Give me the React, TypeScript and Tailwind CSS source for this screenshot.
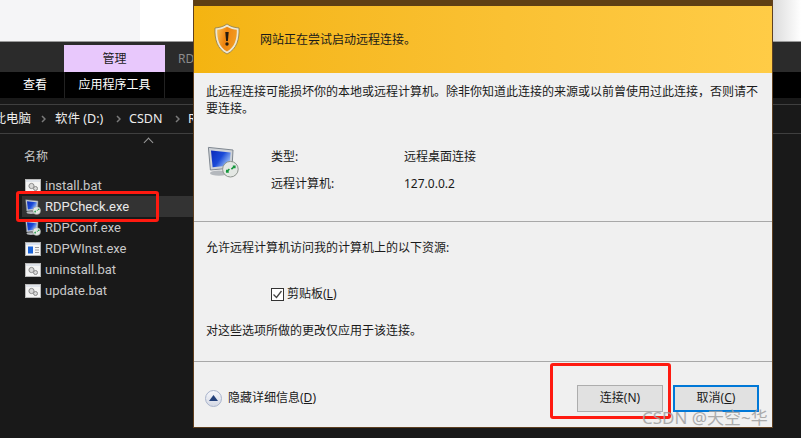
const font = { fontFamily: '"Noto Sans", "Noto Sans CJK SC", sans-serif' };
const fileFont = { fontFamily: 'Roboto, "Noto Sans CJK SC", sans-serif' };

function BatIcon() {
  return (
    <svg width="16" height="14" viewBox="0 0 16 14" className="shrink-0">
      <rect x="0.5" y="0.5" width="15" height="13" fill="#f4f4f4" stroke="#b8b8b8" />
      <rect x="1" y="1" width="14" height="2" fill="#dfe3ea" />
      <circle cx="6.5" cy="7" r="2.6" fill="#d8d8d8" stroke="#8a8a8a" />
      <circle cx="10.5" cy="9.5" r="2" fill="#d8d8d8" stroke="#8a8a8a" />
    </svg>
  );
}

function RdpIcon({ size = 16 }: { size?: number }) {
  return (
    <svg width={size} height={size} viewBox="0 0 16 16" className="shrink-0">
      <defs>
        <linearGradient id="scr" x1="0" y1="0" x2="1" y2="0.6">
          <stop offset="0" stopColor="#0a28b8" />
          <stop offset="0.55" stopColor="#1a4ad8" />
          <stop offset="1" stopColor="#9cc0f4" />
        </linearGradient>
      </defs>
      <path d="M0.700 0.700 L13 2 L12.500 11 L1.700 12 Z" fill="#cfd3d8" stroke="#7f8790" strokeWidth="0.5" />
      <path d="M2 2.200 L11.800 3.200 L11.300 9.800 L2.800 10.600 Z" fill="url(#scr)" />
      <ellipse cx="6" cy="13.600" rx="4.500" ry="1.300" fill="#b4b8bd" />
      <circle cx="11.700" cy="11.600" r="3.900" fill="#e4e8e4" stroke="#8e948e" strokeWidth="0.5" />
      <path d="M9.600 13 L11.200 11.600 M12.200 11.600 L13.800 10.200 M12.900 10.100 h1 v1 M9.900 11.900 v1.100 h1" stroke="#15963c" strokeWidth="0.8" fill="none" />
    </svg>
  );
}

function WinstIcon() {
  return (
    <svg width="16" height="14" viewBox="0 0 16 14" className="shrink-0">
      <rect x="0.5" y="0.5" width="15" height="13" fill="#f6f6f6" stroke="#b0b0b0" />
      <rect x="1" y="1" width="14" height="2" fill="#d9e2f0" />
      <rect x="3" y="4.5" width="5" height="7" fill="#1a63d8" />
      <path d="M10 5.5 h4 M10 8 h4 M10 10.5 h4" stroke="#9a9a9a" />
    </svg>
  );
}

function Shield() {
  return (
    <svg width="26" height="32" viewBox="0 0 26 32">
      <defs>
        <linearGradient id="sh" x1="0" y1="0" x2="1" y2="0.3">
          <stop offset="0" stopColor="#fcc050" />
          <stop offset="0.5" stopColor="#ee8410" />
          <stop offset="1" stopColor="#f39a20" />
        </linearGradient>
      </defs>
      <path d="M13 1 C17 4 21 4.500 25 5 C25.500 16 23 26 13 31 C3 26 0.500 16 1 5 C5 4.500 9 4 13 1 Z" fill="#efe8d2" stroke="#8b7a4a" strokeWidth="0.8" />
      <path d="M13 3.800 C16.500 5.800 20 6.500 22.800 6.800 C23 16 20.800 24.300 13 28.500 C5.200 24.300 3 16 3.200 6.800 C6 6.500 9.500 5.800 13 3.800 Z" fill="url(#sh)" />
      <path d="M11.300 9 h3.400 l-0.800 9 h-1.800 Z" fill="#231a10" />
      <circle cx="13" cy="21" r="1.700" fill="#231a10" />
    </svg>
  );
}

const files = [
  { name: "install.bat", icon: <BatIcon /> },
  { name: "RDPCheck.exe", icon: <RdpIcon />, selected: true },
  { name: "RDPConf.exe", icon: <RdpIcon /> },
  { name: "RDPWInst.exe", icon: <WinstIcon /> },
  { name: "uninstall.bat", icon: <BatIcon /> },
  { name: "update.bat", icon: <BatIcon /> },
];

function Chevron() {
  return (
    <svg width="5" height="8" viewBox="0 0 5 8" className="shrink-0">
      <path d="M1 1 L4 4 L1 7" stroke="#7a7a7a" strokeWidth="1.500" fill="none" />
    </svg>
  );
}

export default function App() {
  return (
    <div className="relative w-[801px] h-[438px] overflow-hidden bg-[#191919]" style={font}>
      {/* Page behind */}
      <div className="flex h-[41px]">
        <div className="w-[140px] bg-[#f5f5f7]" />
        <div className="flex-1 bg-white" />
        <div className="w-[28px] bg-gradient-to-r from-[#dcdcdc] to-white" />
      </div>
      <div className="h-px bg-[#9a9a9a]" />

      {/* Explorer */}
      <div className="flex flex-col">
        <div className="h-[30px] bg-[#2b2b2b] flex items-end pl-[64px] text-[12px]">
          <div className="w-[101px] h-[27px] pt-[1px] bg-[#e8c8fc] text-[#1c1c1c] flex items-center justify-center">管理</div>
          <div className="pl-[13px] h-[27px] flex items-center text-[#8c8c8c]">RDP</div>
        </div>
        <div className="h-[26px] bg-black flex items-center text-[12px] text-white">
          <div className="w-[64px] pl-[23px]">查看</div>
          <div className="w-[101px] h-full flex items-center justify-center border-x border-[#222]">应用程序工具</div>
        </div>
        <div className="h-[6px] bg-[#191919]" />
        <div className="h-[30px] bg-[#191919] border-y border-[#3f3f3f] flex items-center text-[12.5px] text-[#ececec] whitespace-nowrap">
          <span className="w-[31px] overflow-hidden shrink-0 flex justify-end">
            <span className="shrink-0">此电脑</span>
          </span>
          <span className="ml-[10px]"><Chevron /></span>
          <span className="ml-[9px] w-[49px]">软件 (D:)</span>
          <span className="ml-[12px]"><Chevron /></span>
          <span className="ml-[8px] w-[34px]">CSDN</span>
          <span className="ml-[12px]"><Chevron /></span>
          <span className="ml-[8px]">R</span>
        </div>
        <div className="relative pl-[24px] pt-[15px] text-[#c8c8c8]">
          <div className="text-[12px] leading-[16px] mb-[10px]">名称</div>
          <span className="absolute left-[145px] top-[5px] w-[7px] h-[7px] border-l border-t border-[#9a9a9a] rotate-45" />
          <div className="flex flex-col -ml-[2px]">
            {files.map((f) => (
              <div
                key={f.name}
                style={fileFont}
                className={
                  "h-[21px] w-[171px] flex items-center gap-[4px] pl-[3px] text-[13px] whitespace-nowrap " +
                  (f.selected ? "bg-[#333] text-[#e8e8e8]" : "")
                }
              >
                {f.icon}
                <span>{f.name}</span>
              </div>
            ))}
          </div>
        </div>
      </div>

      {/* Dialog window */}
      <div className="absolute left-[193px] top-0 w-[580px] h-[428px] bg-[#f0f0f0] border-x border-b border-[#5f4020] flex flex-col text-[12px] text-[#1a1a1a]">
        <div className="h-[6px] bg-[#5f3f14] shrink-0" />
        <div className="h-[67px] shrink-0 bg-gradient-to-r from-[#f4b410] to-[#ffcc46] flex items-center pl-[20px] pb-[2px] gap-[20px]">
          <Shield />
          <span className="text-[12px] mt-[3px]">网站正在尝试启动远程连接。</span>
        </div>
        <div className="h-[148px] shrink-0 px-[12px] pt-[10px]">
          <p className="leading-[17px] w-[556px]">此远程连接可能损坏你的本地或远程计算机。除非你知道此连接的来源或以前曾使用过此连接，否则请不要连接。</p>
          <div className="flex mt-[32px]">
            <div className="w-[64px] ml-[1px] -mt-[3px]"><RdpIcon size={32} /></div>
            <div className="flex flex-col gap-[11px] w-[133px] leading-[16px]">
              <span>类型:</span>
              <span>远程计算机:</span>
            </div>
            <div className="flex flex-col gap-[11px] leading-[16px]">
              <span>远程桌面连接</span>
              <span>127.0.0.2</span>
            </div>
          </div>
        </div>
        <div className="h-px bg-[#a8a8a8] shrink-0" />
        <div className="h-[139px] shrink-0 px-[12px] pt-[18px] leading-[16px]">
          <div>允许远程计算机访问我的计算机上的以下资源:</div>
          <label className="flex items-center gap-[3px] ml-[65px] mt-[30px]">
            <span className="w-[13px] h-[13px] border border-[#333] bg-white flex items-center justify-center">
              <svg width="11" height="11" viewBox="0 0 11 11">
                <path d="M1.500 5.500 L4.500 8.500 L9.500 2" stroke="#444" strokeWidth="1.300" fill="none" />
              </svg>
            </span>
            <span>剪贴板(<span className="underline">L</span>)</span>
          </label>
          <div className="mt-[21px]">对这些选项所做的更改仅应用于该连接。</div>
        </div>
        <div className="h-px bg-[#a8a8a8] shrink-0" />
        <div className="flex-1 flex items-center pl-[11px] pr-[13px] pt-[7px]">
          <span className="w-[17px] h-[17px] rounded-full border border-[#a9b4cc] bg-gradient-to-b from-[#f6f7fb] to-[#d5d9e4] flex items-center justify-center">
            <svg width="9" height="6" viewBox="0 0 9 6"><path d="M4.500 0 L9 6 H0 Z" fill="#23417a" /></svg>
          </span>
          <span className="ml-[6px] -mt-[1px]">隐藏详细信息(<span className="underline">D</span>)</span>
          <div className="ml-auto flex gap-[10px]">
            <button className="w-[86px] h-[27px] bg-[#e1e1e1] border border-[#adadad] flex items-center justify-center">连接(N)</button>
            <button className="w-[86px] h-[27px] bg-[#e1e1e1] border-2 border-[#0078d7] flex items-center justify-center">取消(<span className="underline">C</span>)</button>
          </div>
        </div>
      </div>

      {/* Annotations */}
      <div className="absolute left-[16px] top-[191px] w-[143px] h-[31px] border-[3px] border-[#ff1a10] rounded-[3px]" />
      <div className="absolute left-[550px] top-[363px] w-[121px] h-[56px] border-[3px] border-[#ff1a10] rounded-[3px]" />

      {/* Watermark */}
      <div className="absolute left-[642px] top-[408px] text-[17px] leading-[20px] text-[#a0a0a0] opacity-85 whitespace-nowrap">CSDN @天空~华</div>
    </div>
  );
}
